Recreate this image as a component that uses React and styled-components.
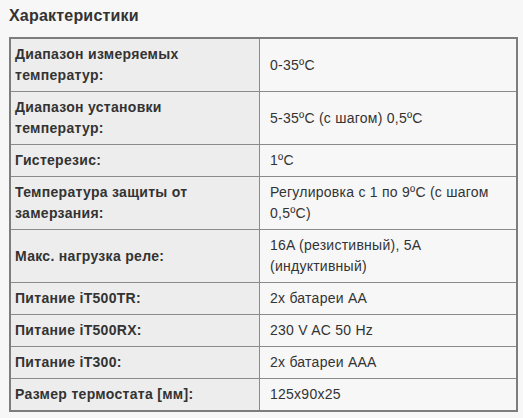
import React from "react";
import styled, { createGlobalStyle } from "styled-components";

const Global = createGlobalStyle`
  html, body { margin: 0; padding: 0; background: #f7f7f7; }
  body { font-family: "Liberation Sans", Arial, sans-serif; color: #333; }
`;

const Wrap = styled.div`
  padding: 6px 5px 8px 9px;
`;

const Title = styled.h3`
  margin: 0 0 11px 0;
  font-size: 16px;
  line-height: 20px;
  font-weight: bold;
  letter-spacing: 0.2px;
  color: #333;
`;

const Table = styled.table`
  width: 509px;
  border-collapse: collapse;
  border: 2px solid #7d7d7d;
  font-size: 14px;
  line-height: 21px;
  letter-spacing: 0.25px;
`;

const Cell = styled.td`
  border: 1px solid #8a8a8a;
  padding: 5px ${(p) => (p.$label ? "14px" : "10px")} 5px
    ${(p) => (p.$label ? "4px" : "10px")};
  vertical-align: middle;
  background: ${(p) => (p.$label ? "#ededed" : "#f7f7f7")};
  font-weight: ${(p) => (p.$label ? "bold" : "normal")};
  letter-spacing: ${(p) => (p.$label ? "0.3px" : "0.25px")};
  width: ${(p) => (p.$label ? "230px" : "auto")};
  color: #333;
`;

const rows = [
  ["Диапазон измеряемых температур:", "0-35ºC"],
  ["Диапазон установки температур:", "5-35ºC (с шагом) 0,5ºC"],
  ["Гистерезис:", "1ºC"],
  ["Температура защиты от замерзания:", "Регулировка с 1 по 9ºC (с шагом 0,5ºC)"],
  ["Макс. нагрузка реле:", "16A (резистивный), 5A (индуктивный)"],
  ["Питание iT500TR:", "2x батареи AA"],
  ["Питание iT500RX:", "230 V AC 50 Hz"],
  ["Питание iT300:", "2x батареи AAA"],
  ["Размер термостата [мм]:", "125x90x25"],
];

export default function App() {
  return (
    <Wrap>
      <Global />
      <Title>Характеристики</Title>
      <Table>
        <tbody>
          {rows.map(([k, v]) => (
            <tr key={k}>
              <Cell $label>{k}</Cell>
              <Cell>{v}</Cell>
            </tr>
          ))}
        </tbody>
      </Table>
    </Wrap>
  );
}
